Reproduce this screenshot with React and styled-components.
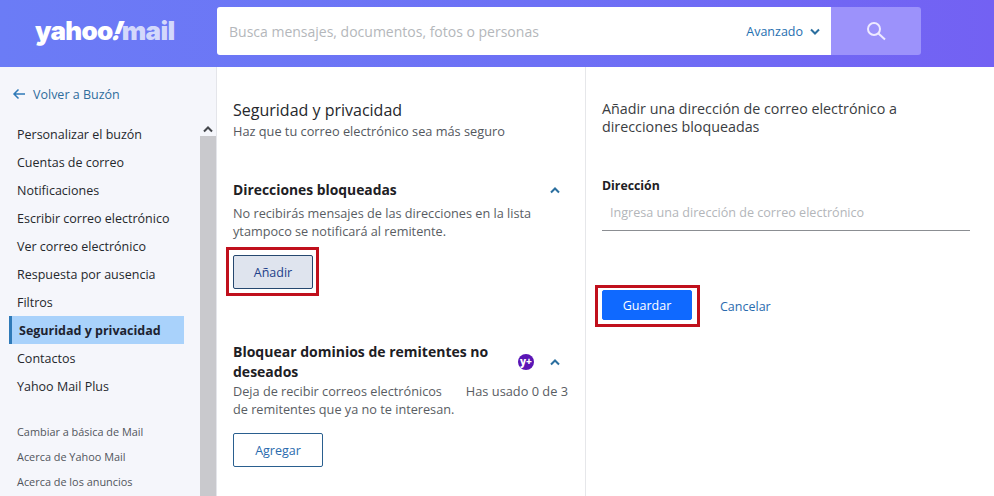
import React from "react";
import styled, { createGlobalStyle } from "styled-components";

const Global = createGlobalStyle`
  html, body { margin: 0; padding: 0; height: 100%; overflow: hidden; background: #fff; }
  body { font-family: "Open Sans", "Noto Sans", sans-serif; -webkit-font-smoothing: antialiased; }
  * { box-sizing: border-box; }
`;

const Page = styled.div`
  width: 994px;
  height: 496px;
  display: flex;
  flex-direction: column;
  overflow: hidden;
`;

const Header = styled.header`
  height: 67px;
  flex: none;
  display: flex;
  align-items: flex-start;
  padding-top: 7px;
  background: linear-gradient(90deg, #6b7cf6 0%, #6d70f5 55%, #7361f3 100%);
`;

const LogoSlot = styled.div`
  width: 217px;
  flex: none;
  height: 48px;
  display: flex;
  align-items: center;
  justify-content: flex-start;
  padding-left: 35px;
`;

const Logo = styled.div`
  font-family: "Inter", "Liberation Sans", sans-serif;
  font-weight: 900;
  font-size: 26px;
  letter-spacing: -0.7px;
  line-height: 28px;
  color: #fff;
  white-space: nowrap;
`;

const LogoBang = styled.span`
  display: inline-block;
  font-style: italic;
  transform: skewX(-12deg);
`;

const LogoMail = styled.span`
  color: #d3d8fb;
`;

const SearchBox = styled.div`
  width: 614px;
  height: 48px;
  background: #fff;
  border-radius: 3px 0 0 3px;
  display: flex;
  align-items: center;
  justify-content: space-between;
  padding: 0 11px 0 12px;
`;

const Placeholder = styled.span`
  font-size: 14px;
  color: #b4b7bb;
`;

const Advanced = styled.span`
  display: flex;
  align-items: center;
  gap: 7px;
  font-size: 12.5px;
  color: #1f6fb0;
`;

const SearchButton = styled.div`
  width: 90px;
  height: 48px;
  border-radius: 0 3px 3px 0;
  background: #9c92fb;
  display: flex;
  align-items: center;
  justify-content: center;
`;

const Body = styled.div`
  flex: 1;
  display: flex;
  min-height: 0;
`;

const Sidebar = styled.aside`
  width: 217px;
  flex: none;
  display: flex;
  background: #f5f6fb;
  box-shadow: inset -1px 0 0 #e4e5ea;
`;

const SideContent = styled.div`
  width: 200px;
  flex: none;
  padding: 17px 0 0 9px;
`;

const BackLink = styled.div`
  height: 20px;
  display: flex;
  align-items: center;
  gap: 7px;
  padding-left: 3px;
  font-size: 12.5px;
  color: #2f6d9c;
`;

const NavList = styled.nav`
  margin-top: 16px;
  display: flex;
  flex-direction: column;
`;

const NavItem = styled.div`
  width: 175px;
  height: 28px;
  display: flex;
  align-items: center;
  padding-left: ${(p) => (p.$active ? "7px" : "8px")};
  font-size: 12.5px;
  font-weight: ${(p) => (p.$active ? 700 : 400)};
  color: ${(p) => (p.$active ? "#1d2330" : "#25282d")};
  background: ${(p) => (p.$active ? "#a9d2fb" : "transparent")};
  border-left: ${(p) => (p.$active ? "3px solid #2f7ab8" : "none")};
  white-space: nowrap;
`;

const SmallLinks = styled.div`
  margin-top: 19px;
  display: flex;
  flex-direction: column;
`;

const SmallLink = styled.div`
  height: 25px;
  padding-left: 8px;
  display: flex;
  align-items: center;
  font-size: 10.9px;
  color: #51555c;
  white-space: nowrap;
`;

const ScrollTrack = styled.div`
  width: 16px;
  flex: none;
  display: flex;
  flex-direction: column;
`;

const ScrollArrow = styled.div`
  height: 69px;
  display: flex;
  align-items: flex-end;
  justify-content: center;
  padding-bottom: 3px;
`;

const ScrollThumb = styled.div`
  flex: 1;
  background: #c9c9cd;
`;

const Middle = styled.section`
  width: 369px;
  flex: none;
  border-right: 1px solid #e6e7ea;
  padding: 31px 17px 0 16px;
`;

const Title = styled.h1`
  margin: 0;
  font-size: 16px;
  line-height: 24px;
  font-weight: 400;
  color: #26282c;
`;

const Sub = styled.p`
  margin: 0;
  font-size: 12.75px;
  line-height: 18px;
  color: #54585e;
`;

const Section = styled.div`
  margin-top: ${(p) => p.$mt}px;
`;

const SectionHead = styled.div`
  display: flex;
  align-items: center;
  justify-content: space-between;
  margin-bottom: ${(p) => p.$gap || 0}px;
`;

const SectionTitle = styled.h2`
  margin: 0;
  width: ${(p) => p.$w || "auto"};
  font-size: ${(p) => p.$size || 14}px;
  line-height: 20px;
  font-weight: 700;
  color: #1d2024;
`;

const HeadIcons = styled.div`
  display: flex;
  align-items: center;
  gap: 16px;
  padding-right: 8px;
`;

const Badge = styled.span`
  width: 16px;
  height: 16px;
  border-radius: 50%;
  background: #5a15b5;
  color: #fff;
  font-size: 10px;
  font-weight: 800;
  line-height: 15px;
  text-align: center;
`;

const Desc = styled.div`
  font-size: ${(p) => p.$size || 12.7}px;
  line-height: 18px;
  color: #595d63;
`;

const DescRow = styled.div`
  display: flex;
  justify-content: space-between;
`;

const RedBox = styled.div`
  display: flex;
  width: fit-content;
  border: 3px solid #c0101c;
  padding: ${(p) => p.$pad};
  margin: ${(p) => p.$margin || 0};
  background: #fff;
`;

const Button = styled.button`
  display: block;
  width: ${(p) => p.$w}px;
  height: ${(p) => p.$h}px;
  margin-top: ${(p) => p.$mt || 0}px;
  border: 1px solid ${(p) => p.$border};
  border-radius: 2px;
  background: ${(p) => p.$bg};
  color: ${(p) => p.$color};
  font-family: inherit;
  font-size: 12.5px;
  padding: 0;
`;

const Right = styled.section`
  flex: 1;
  padding: 33px 24px 0 16px;
`;

const RightTitle = styled.h2`
  margin: 0;
  font-size: 14.3px;
  line-height: 18px;
  font-weight: 400;
  color: #3a3d42;
`;

const FieldLabel = styled.div`
  margin-top: 41px;
  font-size: 12.3px;
  line-height: 18px;
  font-weight: 700;
  color: #1d2024;
`;

const Field = styled.div`
  margin-top: 9px;
  height: 27px;
  padding-left: 8px;
  border-bottom: 1px solid #8b8e92;
  font-size: 12.6px;
  line-height: 18px;
  color: #b3b6ba;
`;

const Actions = styled.div`
  margin-top: 54px;
  margin-left: -7px;
  display: flex;
  align-items: center;
  gap: 20px;
`;

const CancelLink = styled.span`
  font-size: 12.5px;
  color: #2a6bae;
`;

const Chevron = ({ up, color = "#2b6f9f", w = 10, sw = 2 }) => (
  <svg width={w} height={w * 0.7} viewBox="0 0 10 7" fill="none">
    <path d={up ? "M1 5.5 5 1.5l4 4" : "M1 1.5l4 4 4-4"} stroke={color} strokeWidth={sw} />
  </svg>
);

export default function App() {
  const nav = [
    "Personalizar el buzón",
    "Cuentas de correo",
    "Notificaciones",
    "Escribir correo electrónico",
    "Ver correo electrónico",
    "Respuesta por ausencia",
    "Filtros",
    "Seguridad y privacidad",
    "Contactos",
    "Yahoo Mail Plus",
  ];
  return (
    <Page>
      <Global />
      <Header>
        <LogoSlot>
          <Logo>
            yahoo<LogoBang>!</LogoBang>
            <LogoMail>mail</LogoMail>
          </Logo>
        </LogoSlot>
        <SearchBox>
          <Placeholder>Busca mensajes, documentos, fotos o personas</Placeholder>
          <Advanced>
            Avanzado <Chevron />
          </Advanced>
        </SearchBox>
        <SearchButton>
          <svg width="20" height="20" viewBox="0 0 20 20" fill="none">
            <circle cx="8" cy="8" r="6" stroke="#eeeaff" strokeWidth="2" />
            <path d="M12.5 12.5 19 18.5" stroke="#eeeaff" strokeWidth="2" />
          </svg>
        </SearchButton>
      </Header>
      <Body>
        <Sidebar>
          <SideContent>
            <BackLink>
              <svg width="14" height="12" viewBox="0 0 14 12" fill="none">
                <path d="M13 6H2M6.500 1.500 2 6l4.500 4.500" stroke="#2f7ab8" strokeWidth="1.500" />
              </svg>
              Volver a Buzón
            </BackLink>
            <NavList>
              {nav.map((n) => (
                <NavItem key={n} $active={n === "Seguridad y privacidad"}>
                  {n}
                </NavItem>
              ))}
            </NavList>
            <SmallLinks>
              <SmallLink>Cambiar a básica de Mail</SmallLink>
              <SmallLink>Acerca de Yahoo Mail</SmallLink>
              <SmallLink>Acerca de los anuncios</SmallLink>
            </SmallLinks>
          </SideContent>
          <ScrollTrack>
            <ScrollArrow>
              <Chevron up color="#44474c" />
            </ScrollArrow>
            <ScrollThumb />
          </ScrollTrack>
        </Sidebar>
        <Middle>
          <Title>Seguridad y privacidad</Title>
          <Sub>Haz que tu correo electrónico sea más seguro</Sub>
          <Section $mt={40}>
            <SectionHead $gap={4}>
              <SectionTitle $size={13.85}>Direcciones bloqueadas</SectionTitle>
              <HeadIcons>
                <Chevron up />
              </HeadIcons>
            </SectionHead>
            <Desc>
              No recibirás mensajes de las direcciones en la lista
              <br />
              ytampoco se notificará al remitente.
            </Desc>
            <RedBox $pad="5px 3px 4px 4px" $margin="7px 0 0 -7px">
              <Button $w={80} $h={34} $border="#25476f" $bg="#dfe4ee" $color="#1e3f8a">
                Añadir
              </Button>
            </RedBox>
          </Section>
          <Section $mt={46}>
            <SectionHead>
              <SectionTitle $w="275px">Bloquear dominios de remitentes no deseados</SectionTitle>
              <HeadIcons>
                <Badge>y+</Badge>
                <Chevron up />
              </HeadIcons>
            </SectionHead>
            <DescRow>
              <Desc>
                Deja de recibir correos electrónicos
                <br />
                de remitentes que ya no te interesan.
              </Desc>
              <Desc $size={12.8}>Has usado 0 de 3</Desc>
            </DescRow>
            <Button $w={90} $h={34} $mt={15} $border="#2a5f8f" $bg="#fff" $color="#2a6bae">
              Agregar
            </Button>
          </Section>
        </Middle>
        <Right>
          <RightTitle>
            Añadir una dirección de correo electrónico a
            <br />
            direcciones bloqueadas
          </RightTitle>
          <FieldLabel>Dirección</FieldLabel>
          <Field>Ingresa una dirección de correo electrónico</Field>
          <Actions>
            <RedBox $pad="2px 5px 4px 4px">
              <Button $w={90} $h={30} $border="#0f69ff" $bg="#0f69ff" $color="#fff">
                Guardar
              </Button>
            </RedBox>
            <CancelLink>Cancelar</CancelLink>
          </Actions>
        </Right>
      </Body>
    </Page>
  );
}
